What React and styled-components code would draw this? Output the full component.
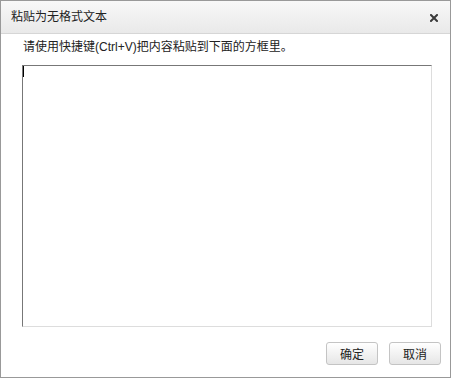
import React from "react";
import styled, { createGlobalStyle } from "styled-components";

const Global = createGlobalStyle`
  html, body { margin: 0; padding: 0; background: #ffffff; }
  body { font-family: "Liberation Sans", "Noto Sans CJK SC", sans-serif; }
`;

const Dialog = styled.div`
  box-sizing: border-box;
  width: 451px;
  height: 378px;
  border: 1px solid #999999;
  background: #ffffff;
  display: flex;
  flex-direction: column;
`;

const TitleBar = styled.div`
  height: 33px;
  box-sizing: border-box;
  border-bottom: 1px solid #d6d6d6;
  background: linear-gradient(#f8f8f8, #e9e9e9);
  display: flex;
  align-items: center;
  justify-content: space-between;
  padding: 0 11px 0 10px;
`;

const Title = styled.span`
  font-size: 12px;
  color: #222222;
  line-height: 16px;
`;

const Close = styled.button`
  border: none;
  background: none;
  padding: 0;
  width: 10px;
  height: 10px;
  margin-top: 2px;
  display: flex;
  align-items: center;
  justify-content: center;
  cursor: pointer;
`;

const Body = styled.div`
  flex: 1;
  display: flex;
  flex-direction: column;
  padding: 5px 19px 0 21px;
`;

const Hint = styled.div`
  font-size: 12px;
  color: #222222;
  line-height: 16px;
  padding-left: 1px;
  margin-bottom: 10px;
`;

const Area = styled.textarea`
  box-sizing: border-box;
  width: 410px;
  height: 262px;
  resize: none;
  margin: 0;
  padding: 0 1px;
  border-style: solid;
  border-width: 1px;
  border-color: #777777 #dddddd #dddddd #777777;
  outline: none;
  font-size: 12px;
  font-family: "Liberation Sans", "Noto Sans CJK SC", sans-serif;
`;

const Caret = styled.div`
  position: absolute;
  left: 1px;
  top: 1px;
  width: 1px;
  height: 11px;
  background: #000000;
`;

const AreaWrap = styled.div`
  position: relative;
  width: 410px;
  height: 262px;
`;

const Footer = styled.div`
  display: flex;
  justify-content: flex-end;
  gap: 11px;
  padding: 15px 9px 12px 0;
`;

const Btn = styled.button`
  box-sizing: border-box;
  width: 52px;
  height: 23px;
  border: 1px solid #c4c4c4;
  border-radius: 3px;
  background: linear-gradient(#ffffff, #e6e6e6);
  font-size: 12px;
  color: #222222;
  font-family: "Liberation Sans", "Noto Sans CJK SC", sans-serif;
  padding: 0;
  cursor: pointer;
`;

export default function App() {
  return (
    <>
      <Global />
      <Dialog>
        <TitleBar>
          <Title>粘贴为无格式文本</Title>
          <Close aria-label="close">
            <svg width="8" height="8" viewBox="0 0 8 8">
              <path d="M1 1 L7 7 M7 1 L1 7" stroke="#3a3a3a" strokeWidth="2" strokeLinecap="square" />
            </svg>
          </Close>
        </TitleBar>
        <Body>
          <Hint>请使用快捷键(Ctrl+V)把内容粘贴到下面的方框里。</Hint>
          <AreaWrap>
            <Area />
            <Caret />
          </AreaWrap>
        </Body>
        <Footer>
          <Btn>确定</Btn>
          <Btn>取消</Btn>
        </Footer>
      </Dialog>
    </>
  );
}
